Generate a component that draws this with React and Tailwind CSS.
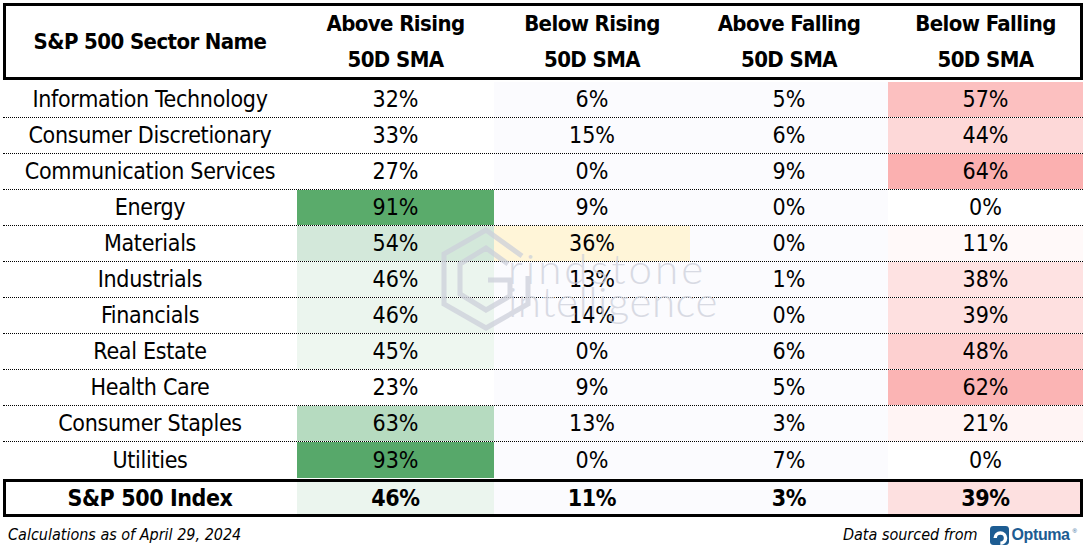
import React from 'react';

const rows = [
  { name: 'Information Technology', v: ['32%', '6%', '5%', '57%'], bg: ['', '', '', 'bg-[#fcc0c0]'] },
  { name: 'Consumer Discretionary', v: ['33%', '15%', '6%', '44%'], bg: ['', '', '', 'bg-[#fdd8d8]'] },
  { name: 'Communication Services', v: ['27%', '0%', '9%', '64%'], bg: ['', '', '', 'bg-[#fbb0b0]'] },
  { name: 'Energy', v: ['91%', '9%', '0%', '0%'], bg: ['bg-[#5aab6b]', '', '', ''] },
  { name: 'Materials', v: ['54%', '36%', '0%', '11%'], bg: ['bg-[#d3e8da]', 'bg-[#fff5d8]', '', 'bg-[#fff9f9]'] },
  { name: 'Industrials', v: ['46%', '13%', '1%', '38%'], bg: ['bg-[#ebf5ee]', '', '', 'bg-[#fee2e2]'] },
  { name: 'Financials', v: ['46%', '14%', '0%', '39%'], bg: ['bg-[#ebf5ee]', '', '', 'bg-[#fee0e0]'] },
  { name: 'Real Estate', v: ['45%', '0%', '6%', '48%'], bg: ['bg-[#eef7f0]', '', '', 'bg-[#fdd0d0]'] },
  { name: 'Health Care', v: ['23%', '9%', '5%', '62%'], bg: ['', '', '', 'bg-[#fbb4b4]'] },
  { name: 'Consumer Staples', v: ['63%', '13%', '3%', '21%'], bg: ['bg-[#b6dbc0]', '', '', 'bg-[#fff4f4]'] },
  { name: 'Utilities', v: ['93%', '0%', '7%', '0%'], bg: ['bg-[#57a86a]', '', '', ''] },
];

const cols = 'grid grid-cols-[294px_197px_196px_198px_195px]';
const boxed = 'outline-3 outline-black -outline-offset-3';
const font = { fontFamily: '"Liberation Sans Narrow", "DejaVu Sans Condensed", "Liberation Sans", sans-serif' };

// faint "Grindstone Intelligence" mark laid over the middle of the table
function Watermark() {
  return (
    <div className="absolute left-[438px] top-[226px] pointer-events-none opacity-75">
      <svg width="96" height="106" viewBox="0 0 96 106" fill="none" stroke="#cdd0da" strokeWidth="5" className="absolute left-0 top-0">
        <path d="M84 30 L48 4 L6 28 V78 L48 102 L90 78 V50" />
        <path d="M70 38 L48 22 L22 38 V68 L48 84 L72 70 V54 H50" />
      </svg>
      <div className="ml-[70px] mt-[26px] flex flex-col leading-[33px] text-[#cdd0da]" style={{ fontFamily: 'Lato, "DejaVu Sans", sans-serif', fontWeight: 300 }}>
        <span className="text-[42px] tracking-[3px]">rindstone</span>
        <span className="text-[42px] tracking-[0.5px]">intelligence</span>
      </div>
    </div>
  );
}

export default function App() {
  return (
    <div className="relative w-[1086px] h-[547px] bg-white text-black overflow-hidden" style={font}>
      <div className="pl-[3px] pt-[3px] w-[1083px]">
        <div className={`${cols} ${boxed} h-[77px] font-bold text-[22px] leading-[36px] tracking-[-0.6px]`}>
          <div className="flex items-center justify-center">S&amp;P 500 Sector Name</div>
          {['Above Rising', 'Below Rising', 'Above Falling', 'Below Falling'].map((h) => (
            <div key={h} className="flex flex-col items-center justify-center">
              <span>{h}</span>
              <span>50D SMA</span>
            </div>
          ))}
        </div>

        <div className="mt-[2px]">
          {rows.map((r, i) => (
            <div
              key={r.name}
              className={`${cols} h-[36px] text-[23px] ${i < rows.length - 1 ? 'border-b border-dotted border-black' : ''}`}
            >
              <div className="flex items-center justify-center tracking-[-0.3px]">{r.name}</div>
              {r.v.map((v, j) => (
                <div
                  key={j}
                  className={`flex items-center justify-center ${r.bg[j] || (j === 1 || j === 2 ? 'bg-[#fbfbfe]' : '')}`}
                >
                  {v}
                </div>
              ))}
            </div>
          ))}
        </div>

        <div className={`${cols} ${boxed} mt-[1px] h-[38px] font-bold text-[23px] tracking-[-0.4px]`}>
          <div className="flex items-center justify-center">S&amp;P 500 Index</div>
          <div className="flex items-center justify-center bg-[#ebf5ee]">46%</div>
          <div className="flex items-center justify-center bg-[#fbfbfe]">11%</div>
          <div className="flex items-center justify-center bg-[#fbfbfe]">3%</div>
          <div className="flex items-center justify-center bg-[#fde0e0]">39%</div>
        </div>

        <div className="flex items-center justify-between mt-[7px] pl-[5px] pr-[6px] italic text-[16px] leading-[22px]">
          <span>Calculations as of April 29, 2024</span>
          <span className="flex items-center gap-[12px]">
            Data sourced from
            <span className="flex items-center gap-[3px] not-italic" style={{ fontFamily: '"Liberation Sans", Arial, sans-serif' }}>
              <svg width="19" height="19" viewBox="0 0 22 22">
                <rect x="0" y="0" width="22" height="22" rx="4" fill="#1d5c92" />
                <path d="M6 14 A6 6 0 1 1 12 20" stroke="#fff" strokeWidth="4" fill="none" />
              </svg>
              <span className="font-bold text-[16px] text-[#1d5c92] tracking-[-0.4px]">Optuma</span>
              <span className="text-[6px] text-[#1d5c92] -mt-[8px]">®</span>
            </span>
          </span>
        </div>
      </div>
      <Watermark />
    </div>
  );
}
